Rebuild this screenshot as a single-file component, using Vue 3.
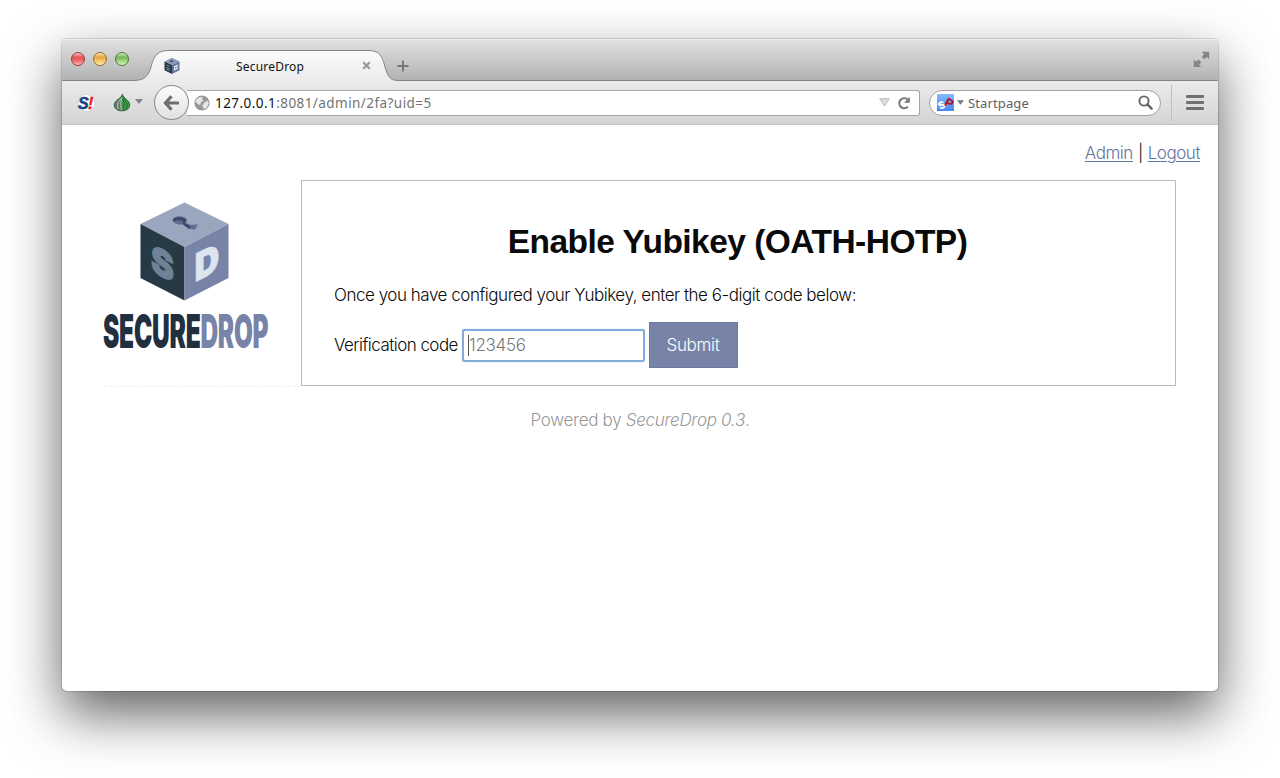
<script setup>
import { ref } from 'vue'
const code = ref('')
const tabTitle = 'SecureDrop'
</script>

<template>
  <div class="desktop">
    <div class="window">
      <header class="titlebar">
        <div class="lights"><i class="light red"></i><i class="light amber"></i><i class="light green"></i></div>
        <div class="tab">
          <svg class="tab-shape" width="272" height="32" viewBox="0 0 272 32">
            <defs>
              <linearGradient id="tabfill" x1="0" y1="0" x2="0" y2="1">
                <stop offset="0" stop-color="#fbfbfb" /><stop offset="1" stop-color="#ebebeb" />
              </linearGradient>
            </defs>
            <path d="M4 32V30.5C15 30.5 19 27 22 17C25 5 29 .5 40 .5H239C250 .5 253 5 256 17C259 27 261 30.5 270 30.5V32Z" fill="url(#tabfill)" />
            <path d="M4 30.5C15 30.5 19 27 22 17C25 5 29 .5 40 .5H239C250 .5 253 5 256 17C259 27 261 30.5 270 30.5" fill="none" stroke="#858585" />
          </svg>
          <svg class="favicon" width="18" height="18" viewBox="0 0 18 18">
            <path d="M9 .8 16.5 4.5 9 8 1.5 4.5Z" fill="#8b98b8" />
            <path d="M1.5 4.5 9 8V17L1.5 13.2Z" fill="#283946" />
            <path d="M16.5 4.5 9 8V17L16.5 13.2Z" fill="#65769d" />
            <path d="M11 9.2 14.7 7.5V12L11 13.8Z" fill="#e2e9f3" /><path d="M12.3 10.1 13.5 9.5V11.2L12.3 11.8Z" fill="#56698f" />
            <path d="M3.4 8 6.7 9.4M3.4 10.4 6.7 12M3.4 12 6.7 13.6" stroke="#7d90a5" />
            <path d="M7.2 4.2H10" stroke="#354a66" stroke-width="1.4" />
          </svg>
          <span class="tab-title">{{ tabTitle }}</span>
          <svg class="tab-close" width="9" height="9" viewBox="0 0 9 9"><path d="M1.2 1.2 7.8 7.8M7.8 1.2 1.2 7.8" stroke="#999" stroke-width="2.2" /></svg>
        </div>
        <svg class="new-tab" width="12" height="12" viewBox="0 0 12 12"><path d="M6 .5V11.5M.5 6H11.5" stroke="#777" stroke-width="1.9" /></svg>
        <svg class="expand" width="17" height="17" viewBox="0 0 17 17">
          <path d="M8.5.8H16.2V8.3L13.8 6 11.2 8.3 8.6 5.8 11 3.3ZM.8 8.5 3.2 10.8 5.5 8.6 8.3 11.2 6 13.7 8.3 16H.8Z" fill="#858585" />
        </svg>
      </header>

      <nav class="toolbar">
        <svg class="noscript" width="20" height="20" viewBox="0 0 20 20">
          <circle cx="10.5" cy="10" r="8.5" fill="#fff" stroke="#d2d2d2" />
          <text x="2" y="15.5" class="ns-s">S</text><text x="12" y="15.5" class="ns-bang">!</text>
        </svg>
        <svg class="onion" width="18" height="19" viewBox="0 0 18 19">
          <path d="M9.3 1.2C8.8 5.8 1.3 6.6 1.3 12 1.3 16 5 17.8 9 17.8S16.7 16 16.7 12C16.7 7 10.3 5.6 9.3 1.2Z" fill="#3d9a48" stroke="#355b3b" />
          <path d="M9 4.5C6.8 7 2 8 2 12.2 2 15.3 5 17.2 9 17.2Z" fill="#6c776b" />
          <path d="M8.8 5C5.5 8 3.4 11 5.3 15.8M8.8 5C7.7 9 7.2 13 8.7 17.2" fill="none" stroke="#c9d1c7" stroke-width=".9" />
          <path d="M9.6 5C15 9.3 15 13 13 16M9.5 6C12 10 11 14 9.6 17" fill="none" stroke="#215f2c" stroke-width=".9" />
        </svg>
        <svg class="caret" width="8" height="5" viewBox="0 0 8 5"><path d="M0 0H8L4 5Z" fill="#858585" /></svg>

        <div class="back">
          <svg width="18" height="18" viewBox="0 0 18 18"><path d="M8.5 2.3 2.5 9 8.5 15.7M3 9H16" fill="none" stroke="#6d6d6d" stroke-width="3.2" /></svg>
        </div>
        <div class="urlbar">
          <svg class="globe" width="16" height="16" viewBox="0 0 16 16">
            <circle cx="8" cy="8" r="7.6" fill="#999" />
            <path d="M2.2 4.4 5.3 2.2 9 2.1 7.7 4 9.6 5.5 7.2 7.1 6 10.2 1.5 7.2ZM10.2 7.4 13.7 5.7 14.8 8.1 12.8 12.7 10.3 14 8.2 11.1Z" fill="#e6e6e6" />
          </svg>
          <span class="url"><b>127.0.0.1</b>:8081/admin/2fa?uid=5</span>
          <svg class="history" width="11" height="9" viewBox="0 0 11 9"><path d="M.7.7H10.3L5.5 8Z" fill="#ddd" stroke="#bbb" /></svg>
          <svg class="reload" width="14" height="14" viewBox="0 0 14 14">
            <path d="M10.8 10.8A5 5 0 1 1 10.3 3.2" fill="none" stroke="#787878" stroke-width="2.1" /><path d="M12.8.8V6.7H7Z" fill="#787878" />
          </svg>
        </div>
        <div class="search">
          <svg class="sp" width="17" height="17" viewBox="0 0 17 17">
            <defs><linearGradient id="spfill" x1="0" y1="0" x2="0" y2="1"><stop offset="0" stop-color="#86b9ff" /><stop offset="1" stop-color="#4487ed" /></linearGradient></defs>
            <rect width="17" height="17" fill="url(#spfill)" />
            <text class="sp-s" transform="translate(3.4 15.8) rotate(-30)">S</text>
            <text class="sp-p" transform="translate(6.8 10.8) rotate(28)">P</text>
          </svg>
          <svg class="search-caret" width="7" height="5" viewBox="0 0 8 5"><path d="M0 0H8L4 5Z" fill="#777" /></svg>
          <span class="engine">Startpage</span>
          <svg class="lens" width="15" height="15" viewBox="0 0 15 15"><circle cx="6" cy="6" r="4.6" fill="none" stroke="#666" stroke-width="1.9" /><path d="M9.4 9.4 13.6 13.6" stroke="#666" stroke-width="2.4" stroke-linecap="round" /></svg>
        </div>
        <div class="menu"><i></i><i></i><i></i></div>
      </nav>

      <main class="page">
        <div class="session"><a>Admin</a><span class="bar">|</span><a>Logout</a></div>
        <div class="columns">
          <aside class="brand">
            <svg class="cube" width="166" height="100" viewBox="0 0 166 100">
              <path d="M80.5 .5 124.5 22 80.5 45 36.5 22Z" fill="#9aa5be" />
              <path d="M36.5 22 80.5 45V98.5L36.5 76Z" fill="#283946" />
              <path d="M124.5 22 80.5 45V98.5L124.5 76Z" fill="#7784a8" />
              <path d="M68.7 18.4C68 14.4 77 12.8 81.5 16 83.5 17.7 83 19.5 82 21L87 23 94 22.3 91 27.5 85 27 79.5 22.5C75 23 69.5 21.7 68.7 18.4Z" fill="#626d94" />
              <path d="M68.7 18C70.5 14.6 79.5 14.4 82 17.5 82.5 19 82 20.3 80.5 21L86.5 24.3 85 27 79 22.5C78 20.5 80 19.5 78 18.7 75 17.7 71 18 69.5 19.7Z" fill="#3a4766" />
              <text class="cube-letter cube-s" textLength="22" lengthAdjust="spacingAndGlyphs" transform="matrix(1 .5 0 1 47.3 69)">S</text>
              <text class="cube-letter cube-d" textLength="24" lengthAdjust="spacingAndGlyphs" transform="matrix(1 -.5 0 1 90.8 80)">D</text>
            </svg>
            <svg class="wordmark" width="172" height="62" viewBox="0 0 172 62">
              <text transform="translate(0 48) scale(.53 .94)"><tspan class="dark" textLength="184" lengthAdjust="spacingAndGlyphs">SECURE</tspan></text>
              <text transform="translate(97.5 48) scale(.53 .94)"><tspan class="blue" textLength="128" lengthAdjust="spacingAndGlyphs">DROP</tspan></text>
            </svg>
          </aside>
          <section class="panel">
            <h1>Enable Yubikey (OATH-HOTP)</h1>
            <p>Once you have configured your Yubikey, enter the 6-digit code below:</p>
            <form class="row" @submit.prevent>
              <label for="code">Verification code</label>
              <div class="field"><i class="cursor"></i><input id="code" v-model="code" placeholder="123456" /></div>
              <button>Submit</button>
            </form>
          </section>
        </div>
        <footer>Powered by <em>SecureDrop 0.3</em>.</footer>
      </main>
    </div>
  </div>
</template>

<style>
body { background: #fff; }
</style>

<style scoped>
* { box-sizing: border-box; }
svg { display: block; flex: none; }
.desktop { height: 778px; padding: 39px 62px 0; overflow: hidden; background: #fff; }
.window { width: 1156px; height: 652px; border-radius: 5px; background: #fff; overflow: hidden; box-shadow: 0 0 0 1px rgba(0,0,0,.14), 0 23px 54px rgba(0,0,0,.62); }
.titlebar { display: flex; height: 42px; border-top: 1px solid #eee; background: linear-gradient(#e1e1e1, #b1b1b1); box-shadow: inset 0 -1px #858585; }
.lights { display: flex; gap: 8px; padding: 12px 0 0 9px; width: 72px; }
.light { width: 14px; height: 14px; border-radius: 50%; border: 1px solid #777; }
.red { background: linear-gradient(#ffc4c4, #e25252 35%, #ee6666 60%, #ffb5b5); border-color: #933b3b; }
.amber { background: linear-gradient(#ffe3b4, #e4a844 35%, #f2c05f 60%, #fff0ae); border-color: #8e6c34; }
.green { background: linear-gradient(#d5f0c1, #74b457 35%, #96cf77 60%, #dcf9b9); border-color: #4f743c; }
.tab { position: relative; width: 262px; height: 32px; margin: 10px 0 0 -5px; display: flex; align-items: center; flex: none; }
.tab-shape { position: absolute; left: 0; top: 0; }
.favicon { position: relative; margin-left: 34px; }
.tab-title { position: relative; margin-left: 55px; width: 68px; font: 12px "Noto Sans", sans-serif; letter-spacing: .2px; color: #111; white-space: nowrap; }
.tab-close { position: relative; margin: -2px 0 0 58px; }
.new-tab { position: relative; margin: 20px 0 0 6px; }
.expand { margin: 11px 8px 0 auto; }
.toolbar { height: 44px; display: flex; align-items: center; background: linear-gradient(#ebebeb, #d4d4d4); border-bottom: 1px solid #c2c2c2; }
.noscript { margin-left: 14px; }
.ns-s { font: italic bold 16px "Liberation Sans", sans-serif; fill: #174487; stroke: #174487; stroke-width: .5px; }
.ns-bang { font: italic bold 16px "Liberation Sans", sans-serif; fill: #ef2020; stroke: #ef2020; stroke-width: .5px; }
.onion { margin-left: 17px; margin-top: -1px; }
.caret { margin-left: 4px; margin-top: -2px; }
.back { position: relative; z-index: 1; flex: none; width: 35px; height: 35px; margin-left: 11px; border: 1px solid #858585; border-radius: 50%; background: linear-gradient(#fcfcfc, #e2e2e2); display: flex; align-items: center; justify-content: center; }
.urlbar { height: 26px; width: 733px; margin-left: -2px; flex: none; display: flex; align-items: center; background: #fff; border: 1px solid #a4a4a4; border-left: 0; border-radius: 0 3px 3px 0; }
.globe { margin-left: 7px; }
.url { margin-left: 5px; font: 13.5px "Noto Sans", sans-serif; letter-spacing: .44px; color: #737373; white-space: nowrap; }
.url b { font-weight: 400; color: #111; }
.history { margin-left: auto; }
.reload { margin: 0 8px 0 7px; }
.search { width: 232px; height: 26px; flex: none; margin-left: 9px; border: 1px solid #a0a0a0; border-radius: 13px; background: #fff; display: flex; align-items: center; padding: 0 7px 0 7px; }
.sp, .wordmark { overflow: visible; }
.sp-s { font: bold 10px "Liberation Sans", sans-serif; fill: #fff; stroke: #fff; stroke-width: .5px; }
.sp-p { font: bold 12px "Liberation Sans", sans-serif; fill: #aa1624; stroke: #aa1624; stroke-width: .3px; }
.search-caret { margin-left: 3px; }
.engine { margin-left: 4px; font: 13px "Noto Sans", sans-serif; letter-spacing: .12px; color: #606060; }
.lens { margin-left: auto; }
.menu { display: flex; flex-direction: column; justify-content: center; gap: 3px; width: 46px; height: 36px; margin-left: 10px; border-left: 1px solid #bbc2ca; padding-left: 14px; }
.menu i { width: 18px; height: 3px; border-radius: 1px; background: #707070; }
.page { font-family: Inter, "Liberation Sans", sans-serif; font-weight: 300; font-size: 17px; letter-spacing: -.47px; color: #0a0a0a; }
.session { height: 55px; padding: 18px 18px 0 0; display: flex; justify-content: flex-end; line-height: 20px; }
.session a { color: #6473a1; text-decoration: underline; text-decoration-thickness: 1px; text-underline-offset: 2px; }
.bar { margin: 0 5px; }
.columns { display: flex; padding: 0 42px; height: 206px; }
.brand { width: 197px; height: 207px; padding-top: 22px; border-bottom: 1px dashed #eee; flex: none; }
.wordmark { margin: -2px 0 0 -1px; font: 900 49px Inter, sans-serif; }
.cube-letter { font-family: Inter, sans-serif; font-weight: 900; stroke-width: 1.6px; stroke-linejoin: miter; }
.cube-s { font-size: 37px; fill: #6e8195; stroke: #6e8195; }
.cube-d { font-size: 38px; fill: #dce4ef; stroke: #dce4ef; stroke-width: 1px; }
.dark { fill: #20303f; }
.blue { fill: #7784a8; }
.panel { width: 875px; border: 1px solid #bbb; padding: 39px 34px 0 32px; flex: none; }
h1 { margin: 0; text-align: center; font: bold 33.5px/44px "Liberation Sans", sans-serif; letter-spacing: -.53px; white-space: nowrap; }
p { margin: 20px 0 0; line-height: 22px; white-space: nowrap; }
.row { display: flex; align-items: center; margin-top: 16px; height: 46px; }
label { width: 128px; white-space: nowrap; letter-spacing: -.54px; }
.field { position: relative; width: 183px; height: 33px; }
.cursor { position: absolute; left: 6px; top: 6px; width: 1px; height: 21px; background: #555; }
input { width: 100%; height: 100%; border: 2px solid #82addb; border-radius: 3px; outline: 0; box-shadow: 0 0 1px #82addb; padding: 0 5px; font: inherit; letter-spacing: -.3px; background: #fff; }
input::placeholder { color: #777; opacity: 1; }
button { width: 89px; height: 46px; margin-left: 4px; border: 1px solid #6d7aa2; background: #7784a8; color: #fff; font: inherit; letter-spacing: -.3px; padding: 0 1px 0 0; }
footer { margin-top: 23px; line-height: 22px; text-align: center; letter-spacing: -.3px; color: #999; }
em { font-style: italic; }
</style>
